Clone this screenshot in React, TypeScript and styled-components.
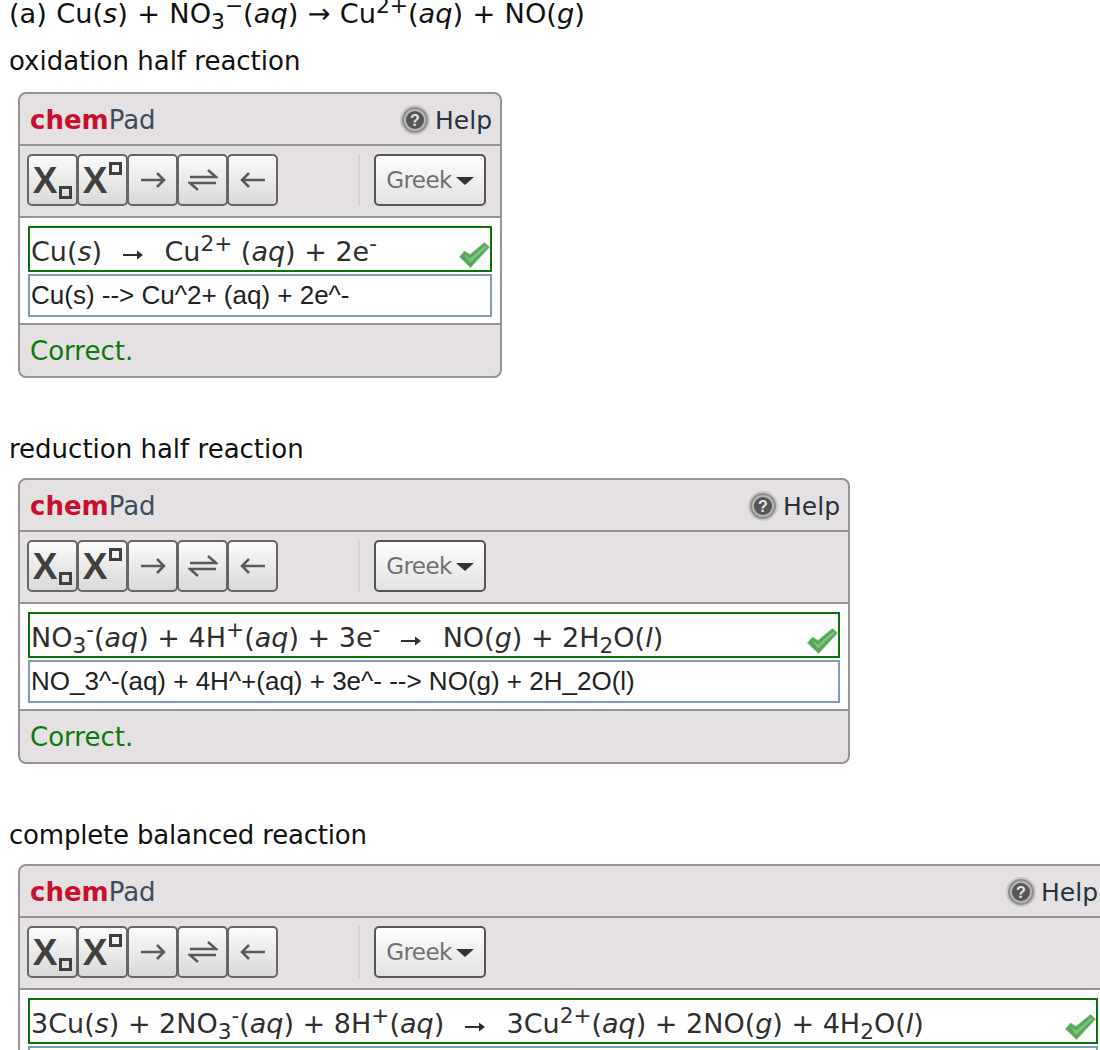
import { ReactNode } from "react";
import styled, { createGlobalStyle } from "styled-components";

const GlobalStyle = createGlobalStyle`
  html, body {
    margin: 0;
    padding: 0;
    width: 1100px;
    height: 1050px;
    overflow: hidden;
    background: #fff;
  }
`;

const Page = styled.div`
  width: 1100px;
  height: 1050px;
  overflow: hidden;
  box-sizing: border-box;
  padding: 0 0 0 9px;
  font-family: "DejaVu Sans", Verdana, sans-serif;
  font-size: 26px;
  color: #111;
`;

const Question = styled.div`
  height: 42px;
  line-height: 28px;
  font-size: 27.2px;
  word-spacing: 0.7px;
  white-space: nowrap;

  sub, sup {
    font-size: 80%;
    line-height: 0;
  }

  sup {
    vertical-align: 10px;
  }
`;

const Label = styled.div<{ $top: number; $bottom: number; $tight?: boolean }>`
  height: 36px;
  line-height: 38px;
  margin-top: ${(p) => p.$top}px;
  margin-bottom: ${(p) => p.$bottom}px;
  letter-spacing: ${(p) => (p.$tight ? "-0.2px" : "0")};
  white-space: nowrap;
`;

const Panel = styled.div<{ $width: number }>`
  width: ${(p) => p.$width}px;
  margin-left: 9px;
  box-sizing: border-box;
  border: 2px solid #949494;
  border-radius: 8px;
  background: #e5e1e3;
  overflow: hidden;
  flex-shrink: 0;
`;

const Header = styled.div`
  height: 52px;
  padding: 2px 8px 0 10px;
  box-sizing: border-box;
  display: flex;
  align-items: center;
  justify-content: space-between;
  border-bottom: 2px solid #949494;
`;

const Brand = styled.div`
  color: #3c4b5c;

  b {
    color: #c8102e;
  }
`;

const HelpLink = styled.div`
  display: flex;
  align-items: center;
  gap: 5px;
  font-size: 25px;
  color: #26323e;
`;

const Toolbar = styled.div`
  height: 72px;
  padding: 8px 0 0 7px;
  box-sizing: border-box;
  display: flex;
  align-items: flex-start;
  border-bottom: 2px solid #949494;
`;

const ToolButton = styled.div`
  width: 51px;
  height: 52px;
  margin-right: -1px;
  box-sizing: border-box;
  border: 2px solid #666;
  border-radius: 5px;
  background: linear-gradient(#fbfbfb, #d9d9d7);
  display: flex;
  align-items: center;
  justify-content: center;
  flex-shrink: 0;
`;

const Separator = styled.div`
  width: 2px;
  height: 52px;
  margin: 0 14px 0 81px;
  background: #d6d3d4;
`;

const GreekButton = styled.div`
  width: 112px;
  height: 52px;
  box-sizing: border-box;
  border: 2px solid #555;
  border-radius: 5px;
  background: linear-gradient(#fdfdfd, #e2e2e2);
  display: flex;
  align-items: center;
  justify-content: center;
  gap: 4px;
  color: #707070;
  font-family: "DejaVu Sans", Verdana, sans-serif;
  font-size: 23px;
  letter-spacing: -0.6px;
`;

const Caret = styled.span`
  width: 0;
  height: 0;
  margin-top: 2px;
  border-left: 9px solid transparent;
  border-right: 9px solid transparent;
  border-top: 8px solid #333;
`;

const XKey = styled.span`
  font-family: "Liberation Sans", Arial, sans-serif;
  font-size: 37px;
  font-weight: 700;
  line-height: 1;
  color: #404040;
`;

const XBox = styled.span<{ $up?: boolean }>`
  width: 13px;
  height: 13px;
  box-sizing: border-box;
  border: 3px solid #404040;
  margin-left: 2px;
  align-self: ${(p) => (p.$up ? "flex-start" : "flex-end")};
  margin-top: ${(p) => (p.$up ? "6px" : "0")};
  margin-bottom: ${(p) => (p.$up ? "0" : "5px")};
`;

const Body = styled.div`
  background: #fff;
  padding: 8px 8px 6px;
  display: flex;
  flex-direction: column;
  gap: 2px;
  border-bottom: 2px solid #949494;
`;

const Preview = styled.div`
  height: 46px;
  box-sizing: border-box;
  border: 2px solid #0a730a;
  padding: 0 0 0 1px;
  display: flex;
  justify-content: space-between;
  color: #2f2f2f;
  font-size: 27px;
  white-space: pre;
  line-height: 47px;

  i {
    font-style: italic;
  }

  sub, sup {
    font-size: 80%;
    line-height: 0;
  }
`;

const Formula = styled.span``;

const Source = styled.div`
  height: 43px;
  box-sizing: border-box;
  border: 2px solid #7f9db9;
  padding: 0 1px;
  line-height: 39px;
  font-family: "Liberation Sans", Arial, sans-serif;
  font-size: 26px;
  color: #222;
  white-space: pre;
`;

const Footer = styled.div`
  height: 51px;
  padding: 0 0 0 10px;
  line-height: 52px;
  color: #0a7a0a;
`;

const CheckMark = styled.svg`
  align-self: flex-end;
  flex-shrink: 0;
  margin-bottom: 2px;
`;

const InlineArrow = styled.svg`
  margin: 0 3px;
`;

function HelpIcon() {
  return (
    <svg width="30" height="30" viewBox="0 0 30 30">
      <circle cx="15" cy="15" r="15" fill="#c9c7c8" />
      <circle cx="15" cy="15" r="13" fill="#8f8f8f" />
      <circle cx="15" cy="15" r="11" fill="#b4b4b4" />
      <circle cx="15" cy="15" r="9" fill="#565656" />
      <text x="15" y="21" textAnchor="middle" fontFamily="Liberation Sans" fontWeight="700" fontSize="16" fill="#e4e4e4">?</text>
    </svg>
  );
}

function Check() {
  return (
    <CheckMark width="31" height="26" viewBox="0 0 31 26">
      <path d="M0.5 15 L5.5 9 L11 12.5 L25.5 0.5 L30.5 5 L11.5 25.5 Z" fill="#57a657" stroke="#8cc78c" strokeWidth="1" strokeLinejoin="round" />
      <path d="M5 12 L11 16.5 L26 3.5 L28 5 L11 21 Z" fill="#7cc07c" />
    </CheckMark>
  );
}

const arrowProps = { width: 30, height: 30, viewBox: "0 0 30 30", fill: "none", stroke: "#5a5a5a", strokeWidth: 2.5 };

function ArrowRight() {
  return (
    <svg {...arrowProps}>
      <path d="M3 15 H26 M19 8 L26 15 L19 22" />
    </svg>
  );
}

function ArrowLeft() {
  return (
    <svg {...arrowProps}>
      <path d="M27 15 H4 M11 8 L4 15 L11 22" />
    </svg>
  );
}

function ArrowBoth() {
  return (
    <svg {...arrowProps}>
      <path d="M2 12 H28 L20 5 M28 18 H2 L10 25" />
    </svg>
  );
}

function SmallArrow() {
  return (
    <InlineArrow width="22" height="12" viewBox="0 0 22 12">
      <path d="M1 5 H15 V1.5 L21 6 L15 10.5 V7 H1 Z" fill="#2f2f2f" />
    </InlineArrow>
  );
}

function ChemPad(props: { width: number; formula: ReactNode; source: string }) {
  return (
    <Panel $width={props.width}>
      <Header>
        <Brand>
          <b>chem</b>Pad
        </Brand>
        <HelpLink>
          <HelpIcon />
          Help
        </HelpLink>
      </Header>
      <Toolbar>
        <ToolButton>
          <XKey>X</XKey>
          <XBox />
        </ToolButton>
        <ToolButton>
          <XKey>X</XKey>
          <XBox $up />
        </ToolButton>
        <ToolButton>
          <ArrowRight />
        </ToolButton>
        <ToolButton>
          <ArrowBoth />
        </ToolButton>
        <ToolButton>
          <ArrowLeft />
        </ToolButton>
        <Separator />
        <GreekButton>
          Greek
          <Caret />
        </GreekButton>
      </Toolbar>
      <Body>
        <Preview>
          <Formula>{props.formula}</Formula>
          <Check />
        </Preview>
        <Source>{props.source}</Source>
      </Body>
      <Footer>Correct.</Footer>
    </Panel>
  );
}

export default function App() {
  return (
    <Page>
      <GlobalStyle />
      <Question>
        (a) Cu(<i>s</i>) + NO<sub>3</sub>
        <sup>−</sup>(<i>aq</i>) → Cu<sup>2+</sup>(<i>aq</i>) + NO(<i>g</i>)
      </Question>
      <Label $top={0} $bottom={14}>oxidation half reaction</Label>
      <ChemPad
        width={484}
        formula={
          <>
            Cu(<i>s</i>)  <SmallArrow />  Cu<sup>2+</sup> (<i>aq</i>) + 2e<sup>-</sup>
          </>
        }
        source="Cu(s) --> Cu^2+ (aq) + 2e^-"
      />
      <Label $top={52} $bottom={12}>reduction half reaction</Label>
      <ChemPad
        width={832}
        formula={
          <>
            NO<sub>3</sub>
            <sup>-</sup>(<i>aq</i>) + 4H<sup>+</sup>(<i>aq</i>) + 3e<sup>-</sup>  <SmallArrow />  NO(<i>g</i>) + 2H<sub>2</sub>O(<i>l</i>)
          </>
        }
        source="NO_3^-(aq) + 4H^+(aq) + 3e^- --> NO(g) + 2H_2O(l)"
      />
      <Label $top={52} $bottom={12} $tight>complete balanced reaction</Label>
      <ChemPad
        width={1090}
        formula={
          <>
            3Cu(<i>s</i>) + 2NO<sub>3</sub>
            <sup>-</sup>(<i>aq</i>) + 8H<sup>+</sup>(<i>aq</i>)  <SmallArrow />  3Cu<sup>2+</sup>(<i>aq</i>) + 2NO(<i>g</i>) + 4H<sub>2</sub>O(<i>l</i>)
          </>
        }
        source=""
      />
    </Page>
  );
}
